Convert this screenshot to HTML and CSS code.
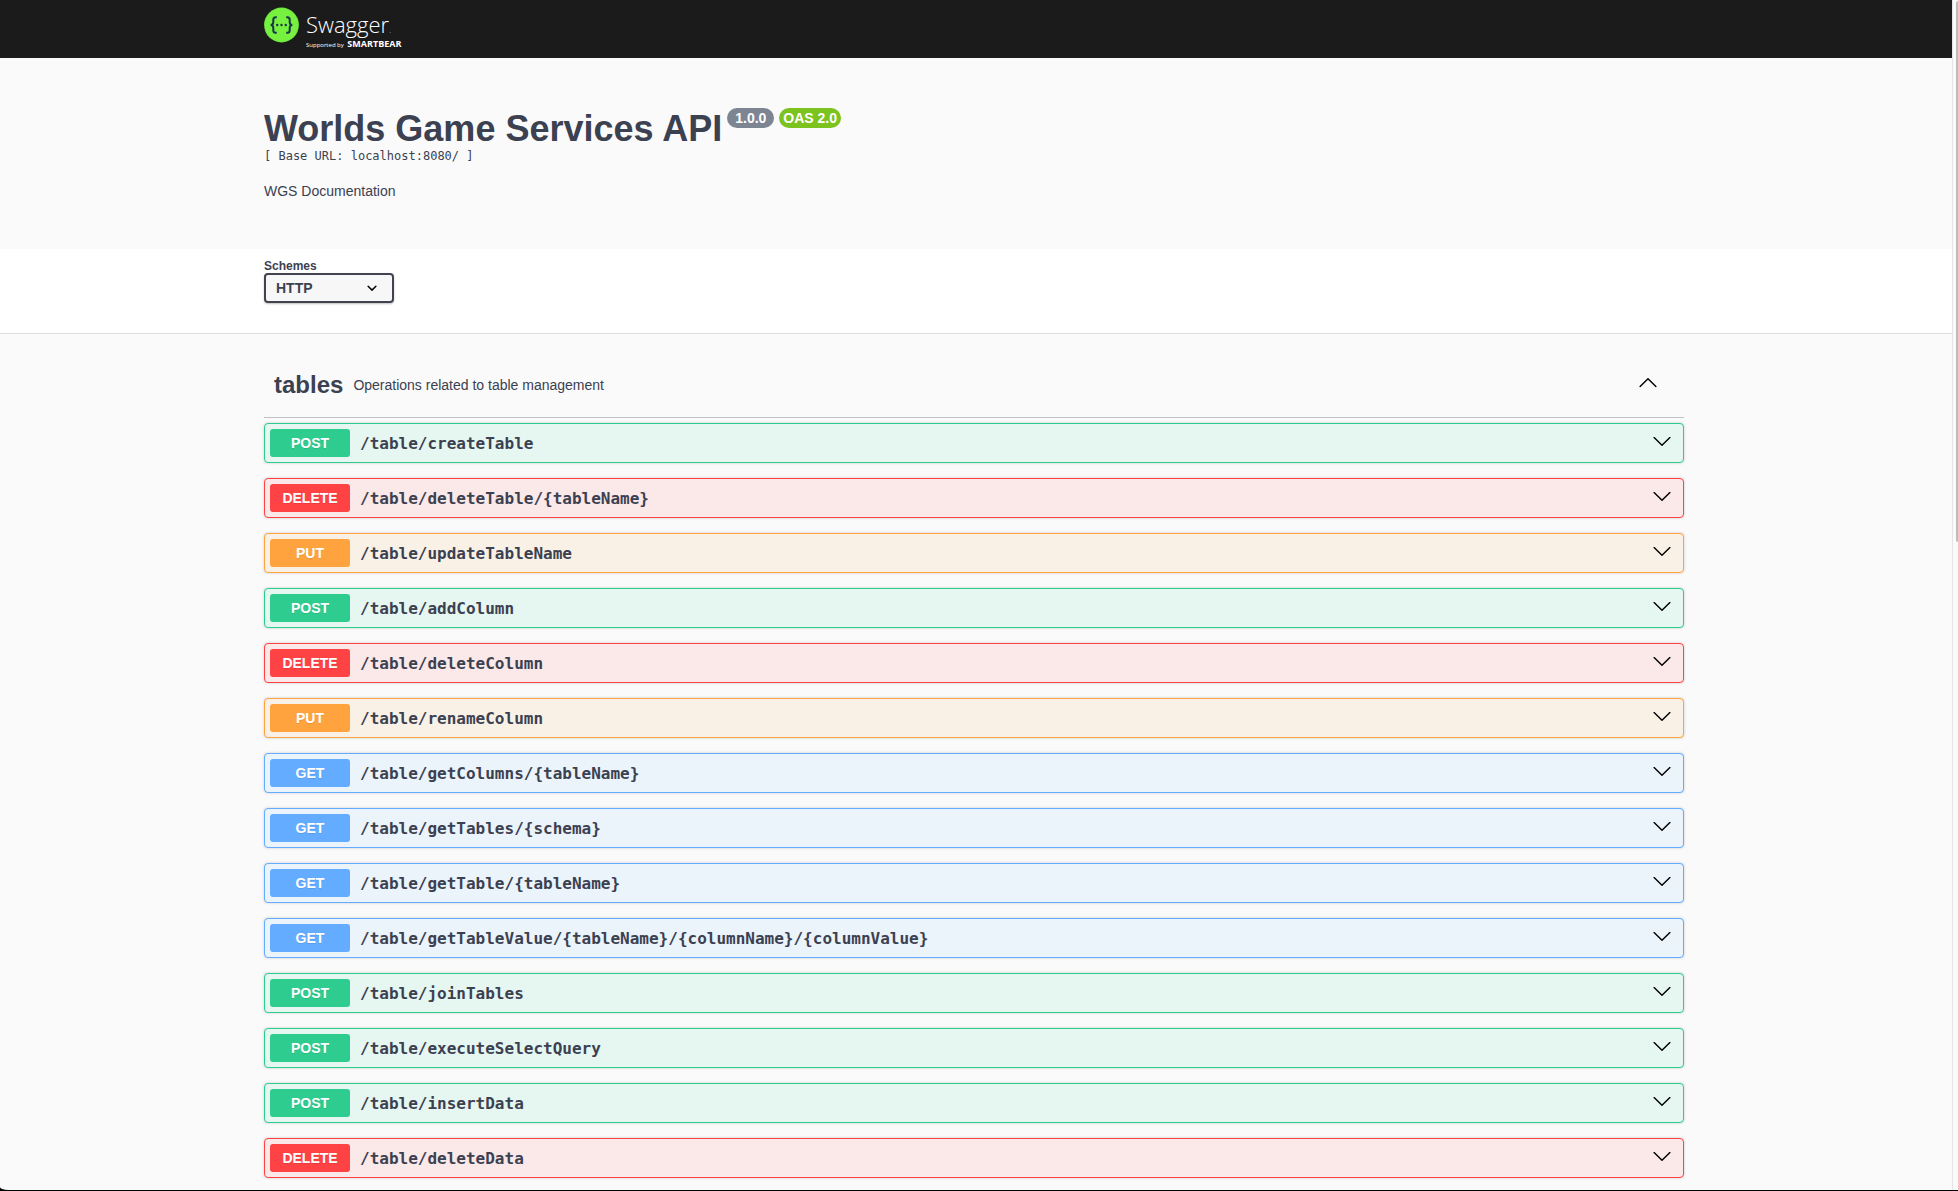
FILE: index.html
```html
<!DOCTYPE html>
<html lang="en">
<head>
<meta charset="utf-8">
<title>Swagger UI</title>
<link rel="stylesheet" href="styles.css">
</head>
<body>
<svg class="sprite" aria-hidden="true">
  <symbol id="arrow-down" viewBox="0 0 20 20"><path d="M17.4 6.1c.3-.3.7-.3 1 0s.3.7 0 1l-7.900 7.700c-.3.3-.7.3-1 0L1.600 7.100c-.3-.3-.3-.7 0-1s.7-.3 1 0L10 13.200z"/></symbol>
  <symbol id="arrow-up" viewBox="0 0 20 20"><path d="M2.600 13.900c-.3.3-.7.3-1 0s-.3-.7 0-1l7.900-7.700c.3-.3.7-.3 1 0l7.900 7.700c.3.3.3.7 0 1s-.7.3-1 0L10 6.800z"/></symbol>
</svg>
<div class="page">
  <header class="band topbar">
    <div class="wrapper">
      <a class="logo" href="#" aria-label="Swagger">
        <svg class="logo-mark" viewBox="0 0 36 36" aria-hidden="true">
          <circle cx="17.500" cy="18" r="17.400" fill="#6ce83c"/>
          <circle cx="17.500" cy="18" r="16.500" fill="#77f03f"/>
          <g fill="none" stroke="#173647" stroke-width="2">
            <path d="M12.800 10.300h-1.200c-1.800 0-2.300.9-2.300 2.500v2.300c0 1.900-.8 2.900-2.700 2.900 1.900 0 2.700 1 2.700 2.900v2.300c0 1.600.5 2.500 2.300 2.500h1.200"/>
            <path d="M22.200 10.300h1.200c1.800 0 2.300.9 2.300 2.500v2.300c0 1.900.8 2.900 2.700 2.900-1.900 0-2.700 1-2.700 2.900v2.300c0 1.600-.5 2.500-2.300 2.500h-1.200"/>
          </g>
          <g fill="#173647"><circle cx="13.200" cy="18" r="1.200"/><circle cx="17.500" cy="18" r="1.200"/><circle cx="21.800" cy="18" r="1.200"/></g>
        </svg>
        <span class="logo-text">
          <span class="logo-name">Swagger<span class="logo-dot">.</span></span>
          <span class="logo-by">Supported by <b>SMARTBEAR</b></span>
        </span>
      </a>
    </div>
  </header>
  <main>
    <section class="band info">
      <div class="wrapper">
        <div class="title-row">
          <h1>Worlds Game Services API</h1>
          <span class="version">1.0.0</span>
          <span class="version oas">OAS 2.0</span>
        </div>
        <pre class="base-url">[ Base URL: localhost:8080/ ]</pre>
        <p class="description">WGS Documentation</p>
      </div>
    </section>
    <section class="band schemes">
      <div class="wrapper">
        <label for="schemes">Schemes</label>
        <div class="select-box">
          <select id="schemes"><option>HTTP</option></select>
          <svg viewBox="0 0 20 20" aria-hidden="true"><path d="M13.418 7.859a.695.695 0 0 1 .978 0 .68.680 0 0 1 0 .969l-3.908 3.830a.697.697 0 0 1-.979 0l-3.908-3.830a.68.680 0 0 1 0-.969.695.695 0 0 1 .978 0L10 11z"/></svg>
        </div>
      </div>
    </section>
    <section class="band operations">
      <div class="wrapper">
        <div class="tag">
          <h2>tables</h2>
          <p>Operations related to table management</p>
          <button type="button" aria-label="Collapse tables"><svg aria-hidden="true"><use href="#arrow-up"/></svg></button>
        </div>
        <div class="list">
          <button type="button" class="op post"><span class="method">POST</span><span class="path">/table/createTable</span><svg aria-hidden="true"><use href="#arrow-down"/></svg></button>
          <button type="button" class="op delete"><span class="method">DELETE</span><span class="path">/table/deleteTable/{tableName}</span><svg aria-hidden="true"><use href="#arrow-down"/></svg></button>
          <button type="button" class="op put"><span class="method">PUT</span><span class="path">/table/updateTableName</span><svg aria-hidden="true"><use href="#arrow-down"/></svg></button>
          <button type="button" class="op post"><span class="method">POST</span><span class="path">/table/addColumn</span><svg aria-hidden="true"><use href="#arrow-down"/></svg></button>
          <button type="button" class="op delete"><span class="method">DELETE</span><span class="path">/table/deleteColumn</span><svg aria-hidden="true"><use href="#arrow-down"/></svg></button>
          <button type="button" class="op put"><span class="method">PUT</span><span class="path">/table/renameColumn</span><svg aria-hidden="true"><use href="#arrow-down"/></svg></button>
          <button type="button" class="op get"><span class="method">GET</span><span class="path">/table/getColumns/{tableName}</span><svg aria-hidden="true"><use href="#arrow-down"/></svg></button>
          <button type="button" class="op get"><span class="method">GET</span><span class="path">/table/getTables/{schema}</span><svg aria-hidden="true"><use href="#arrow-down"/></svg></button>
          <button type="button" class="op get"><span class="method">GET</span><span class="path">/table/getTable/{tableName}</span><svg aria-hidden="true"><use href="#arrow-down"/></svg></button>
          <button type="button" class="op get"><span class="method">GET</span><span class="path">/table/getTableValue/{tableName}/{columnName}/{columnValue}</span><svg aria-hidden="true"><use href="#arrow-down"/></svg></button>
          <button type="button" class="op post"><span class="method">POST</span><span class="path">/table/joinTables</span><svg aria-hidden="true"><use href="#arrow-down"/></svg></button>
          <button type="button" class="op post"><span class="method">POST</span><span class="path">/table/executeSelectQuery</span><svg aria-hidden="true"><use href="#arrow-down"/></svg></button>
          <button type="button" class="op post"><span class="method">POST</span><span class="path">/table/insertData</span><svg aria-hidden="true"><use href="#arrow-down"/></svg></button>
          <button type="button" class="op delete"><span class="method">DELETE</span><span class="path">/table/deleteData</span><svg aria-hidden="true"><use href="#arrow-down"/></svg></button>
        </div>
      </div>
    </section>
  </main>
</div>
<div class="track"><div class="thumb"></div></div>
</body>
</html>
```
FILE: styles.css
```css
* { box-sizing: border-box; }

html { background: #000; }

body {
  display: flex;
  height: 100vh;
  margin: 0;
  overflow: hidden;
  border-bottom: 1px solid #000;
  color: #3b4151;
  font-family: "Liberation Sans", Arial, sans-serif;
  font-size: 14px;
}

h1, h2, p, pre { margin: 0; }

.sprite { display: none; }

.page {
  flex: 1;
  min-width: 0;
  overflow-y: auto;
  scrollbar-width: none;
  background: #fafafa;
  border-bottom-left-radius: 8px 3px;
}

/* Scroll bar at the window's right edge */
.track {
  display: flex;
  justify-content: flex-end;
  width: 6px;
  padding-top: 1px;
  background: #fafafa;
  border-left: 1px solid #e5e5e5;
}

.thumb {
  width: 2px;
  height: 45.5%;
  background: #bdbdbd;
  border-radius: 2px 0 0 2px;
}

/* Full-width strip; the wrapper centres its content */
.band { padding-right: 4px; }

.wrapper {
  max-width: 1460px;
  margin: 0 auto;
  padding: 0 20px;
}

.topbar {
  height: 58px;
  padding-top: 7px;
  background: #1b1b1b;
}

.logo {
  display: inline-flex;
  gap: 6px;
  color: #fff;
  font-family: "Open Sans", sans-serif;
  text-decoration: none;
}

.logo-mark { width: 36px; height: 36px; }

.logo-text { display: flex; flex-direction: column; }

.logo-name {
  font-size: 22px;
  font-weight: 300;
  line-height: 34px;
}

.logo-dot { font-size: 10px; line-height: 10px; color: #999; }

.logo-by { font-size: 6px; line-height: 6px; }

.logo-by b { margin-left: 2px; font-size: 9px; font-weight: 700; }

.info {
  padding-top: 50px;
  padding-bottom: 50px;
}

.title-row {
  display: flex;
  align-items: flex-start;
  gap: 5px;
}

h1 {
  font-size: 36px;
  line-height: 41px;
}

.version {
  padding: 2px 8px;
  background: #7d8492;
  border-radius: 20px;
  color: #fff;
  font-size: 14px;
  font-weight: 700;
  line-height: 16px;
}

.oas { padding: 2px 4px; background: #7cc31f; }

.base-url {
  font-family: "DejaVu Sans Mono", monospace;
  font-size: 12px;
  line-height: 14px;
}

.description { margin-top: 20px; line-height: 16px; }

.schemes {
  padding-top: 10px;
  padding-bottom: 30px;
  background: #fff;
  border-bottom: 1px solid #dcdcdc;
}

label {
  display: block;
  font-size: 12px;
  font-weight: 700;
  line-height: 14px;
}

.select-box {
  display: grid;
  width: 130px;
}

.select-box > * { grid-area: 1 / 1; }

.select-box svg {
  justify-self: end;
  align-self: center;
  width: 20px;
  height: 20px;
  margin-right: 12px;
  pointer-events: none;
}

select {
  appearance: none;
  height: 30px;
  padding: 0 10px;
  background: #f7f7f7;
  border: 2px solid #41444e;
  border-radius: 4px;
  box-shadow: 0 1px 2px rgba(0, 0, 0, .25);
  color: #3b4151;
  font: 700 14px "Liberation Sans", Arial, sans-serif;
}

.operations { padding-top: 20px; padding-bottom: 20px; }

.tag {
  display: flex;
  align-items: center;
  height: 64px;
  padding: 0 20px 2px 10px;
  border-bottom: 1px solid #c0c2c5;
}

h2 { font-size: 24px; line-height: 28px; }

.tag p { flex: 1; padding: 0 10px; line-height: 16px; }

.tag button {
  padding: 0 6px 4px;
  background: none;
  border: 0;
}

button { color: inherit; font: inherit; cursor: pointer; }

.tag svg, .op svg {
  display: block;
  flex: none;
  width: 20px;
  height: 20px;
}

.list {
  display: flex;
  flex-direction: column;
  gap: 15px;
  padding-top: 5px;
}

.op {
  display: flex;
  align-items: center;
  gap: 10px;
  width: 100%;
  height: 40px;
  padding: 5px 11px 5px 5px;
  border: 1px solid var(--method);
  border-radius: 4px;
  box-shadow: 0 0 3px rgba(0, 0, 0, .19);
  background: var(--tint);
  text-align: left;
}

.op svg { margin-bottom: 4px; }

.method {
  width: 80px;
  background: var(--method);
  border-radius: 3px;
  color: #fff;
  font-weight: 700;
  line-height: 28px;
  text-align: center;
  text-shadow: 0 1px 0 rgba(0, 0, 0, .1);
}

.path {
  flex: 1;
  font-family: "DejaVu Sans Mono", monospace;
  font-size: 16px;
  font-weight: 700;
}

.post { --method: #2fcc90; --tint: #e6f6f0; }
.delete { --method: #ff4244; --tint: #fbe8e8; }
.put { --method: #ffa33e; --tint: #faf1e6; }
.get { --method: #64acff; --tint: #ebf3fb; }
```
